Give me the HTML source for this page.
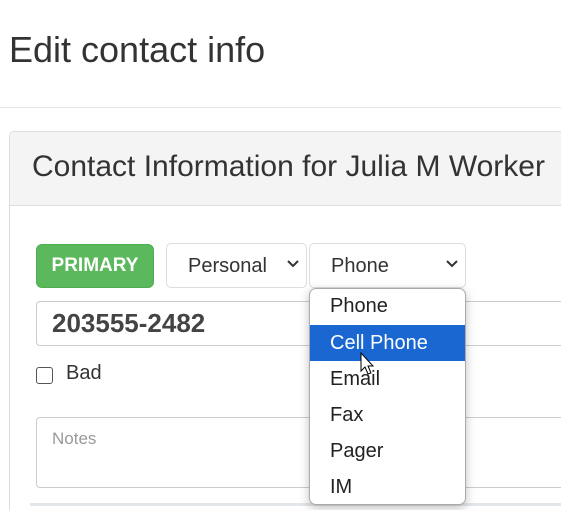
<!DOCTYPE html>
<html><head><style>
html,body{margin:0;width:561px;height:510px;overflow:hidden}
body{background:#fff;font-family:"Liberation Sans",Arial,sans-serif;color:#333;position:relative}
.a{position:absolute;box-sizing:border-box;white-space:nowrap}
</style></head><body>
<div class="a" style="left:9px;top:29px;font-size:36px;color:#333">Edit contact info</div>
<div class="a" style="left:0;top:107px;width:561px;height:1px;background:#e5e5e5"></div>
<div class="a" style="left:9px;top:131px;width:552px;height:379px;border:1px solid #ddd;border-right:none;border-bottom:none;border-radius:5px 0 0 0"></div>
<div class="a" style="left:10px;top:132px;width:551px;height:74px;background:#f4f4f4;border-bottom:1px solid #ddd;border-radius:4px 0 0 0"></div>
<div class="a" style="left:32px;top:150px;font-size:30px;color:#333">Contact Information for Julia M Worker</div>
<div class="a" style="left:36px;top:244px;width:118px;height:44px;background:#5cb85c;border:1px solid #4cae4c;border-radius:6px;color:#fff;font-weight:bold;font-size:19px;line-height:42px;text-align:center">PRIMARY</div>
<div class="a" style="left:166px;top:243px;width:141px;height:45px;border:1px solid #ddd;border-radius:5px;font-size:20px;line-height:45px;padding-left:21px;color:#333">Personal</div>
<svg class="a" style="left:286px;top:259px" width="14" height="10"><path d="M2 2 L7 7 L12 2" fill="none" stroke="#333" stroke-width="2"/></svg>
<div class="a" style="left:309px;top:243px;width:157px;height:45px;border:1px solid #ddd;border-radius:5px;font-size:20px;line-height:45px;padding-left:21px;color:#333">Phone</div>
<svg class="a" style="left:445px;top:259px" width="14" height="10"><path d="M2 2 L7 7 L12 2" fill="none" stroke="#333" stroke-width="2"/></svg>
<div class="a" style="left:36px;top:301px;width:525px;height:45px;border:1px solid #ccc;border-right:none;border-radius:4px 0 0 4px;font-size:26px;font-weight:bold;color:#444;line-height:43px;padding-left:15px">203555-2482</div>
<div class="a" style="left:36px;top:367px;width:17px;height:17px;border:1.5px solid #555;border-radius:3px"></div>
<div class="a" style="left:66px;top:362px;font-size:20px;color:#333">Bad</div>
<div class="a" style="left:36px;top:417px;width:525px;height:71px;border:1px solid #ccc;border-right:none;border-radius:4px 0 0 4px;font-size:17px;color:#999;padding:11px 15px">Notes</div>
<div class="a" style="left:30px;top:503px;width:531px;height:3px;background:#e3e7ea"></div>
<div class="a" style="left:309px;top:288px;width:157px;height:217px;background:#fff;border:1px solid #aaa;border-radius:7px;box-shadow:0 3px 10px rgba(0,0,0,.25);overflow:hidden;font-size:20px;color:#222">
<div style="height:36px;line-height:34px;padding-left:20px">Phone</div>
<div style="height:36px;line-height:36px;padding-left:20px;background:#1a67d2;color:#fff">Cell Phone</div>
<div style="height:36px;line-height:36px;padding-left:20px">Email</div>
<div style="height:36px;line-height:36px;padding-left:20px">Fax</div>
<div style="height:36px;line-height:36px;padding-left:20px">Pager</div>
<div style="height:36px;line-height:36px;padding-left:20px">IM</div>
</div>
<svg class="a" style="left:360px;top:352px" width="16" height="26"><path d="M1 1 L1 19 L5 15 L8 22 L11 21 L8 14 L13 14 Z" fill="#fff" stroke="#000" stroke-width="1"/></svg>
</body></html>
